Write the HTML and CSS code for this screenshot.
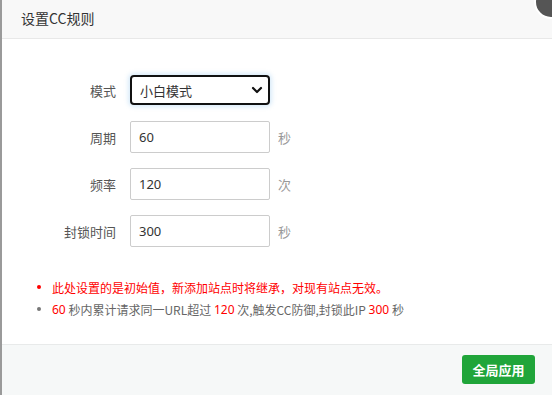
FILE: index.html
```html
<!DOCTYPE html>
<html lang="zh-CN">
<head>
    <meta charset="UTF-8">
    <meta name="viewport" content="width=device-width, initial-scale=1.0">
    <title>设置CC规则</title>
    <link rel="stylesheet" href="styles.css">
</head>
<body>

    <div class="dialog">
        <!-- Title bar -->
        <div class="dialog-head">设置CC规则</div>
        <span class="close-btn"></span>

        <div class="dialog-body">
            <div class="form-row">
                <label>模式</label>
                <div class="select-box">
                    <span>小白模式</span>
                    <svg width="12" height="8" viewBox="0 0 12 8">
                        <path d="M2 2 L6 6 L10 2" fill="none" stroke="#111" stroke-width="2.2" stroke-linecap="round" stroke-linejoin="round"/>
                    </svg>
                </div>
            </div>
            <div class="form-row">
                <label>周期</label>
                <input type="text" value="60">
                <span class="unit">秒</span>
            </div>
            <div class="form-row">
                <label>频率</label>
                <input type="text" value="120">
                <span class="unit">次</span>
            </div>
            <div class="form-row">
                <label>封锁时间</label>
                <input type="text" value="300">
                <span class="unit">秒</span>
            </div>

            <ul class="notes">
                <li class="warn">此处设置的是初始值，新添加站点时将继承，对现有站点无效。</li>
                <li><em>60</em>&nbsp;秒内累计请求同一URL超过&nbsp;<em>120</em>&nbsp;次,触发CC防御,封锁此IP&nbsp;<em>300</em>&nbsp;秒</li>
            </ul>
        </div>

        <div class="dialog-foot">
            <button class="btn-apply">全局应用</button>
        </div>
    </div>

</body>
</html>
```

FILE: styles.css
```css
html, body {
    margin: 0;
    padding: 0;
    height: 100%;
    overflow: hidden;
}

body {
    background: #9a9a9a;
    font-family: "Noto Sans CJK SC", "Noto Sans", sans-serif;
    padding-left: 2px;
    box-sizing: border-box;
}

.dialog {
    position: relative;
    height: 395px;
    background: #fff;
    display: flex;
    flex-direction: column;
}

.dialog-head {
    height: 38px;
    line-height: 36px;
    padding-left: 19px;
    font-size: 14px;
    color: #333;
    background: #f8f8f8;
    border-bottom: 1px solid #e8e8e8;
}

/* close button peeking from the corner */
.close-btn {
    position: absolute;
    top: -15px;
    right: -16px;
    width: 30px;
    height: 30px;
    border-radius: 50%;
    background: #555;
    border: 2px solid #fff;
}

.dialog-body {
    flex: 1;
    padding-top: 35px;
}

.form-row {
    display: flex;
    align-items: center;
    height: 32px;
    margin-bottom: 15px;
}

.form-row label {
    width: 114px;
    margin-right: 14px;
    text-align: right;
    font-size: 13px;
    color: #555;
}

.form-row input {
    width: 140px;
    height: 32px;
    box-sizing: border-box;
    border: 1px solid #ccc;
    border-radius: 2px;
    padding: 0 8px;
    font-family: "Noto Sans", sans-serif;
    font-size: 13px;
    color: #333;
    outline: none;
}

.select-box {
    width: 140px;
    height: 30px;
    box-sizing: border-box;
    border: 2px solid #111;
    border-radius: 4px;
    box-shadow: 0 0 4px 2px rgba(102, 175, 233, 0.25);
    display: flex;
    align-items: center;
    justify-content: space-between;
    padding: 0 5px 0 8px;
    font-size: 13px;
    color: #333;
}

.unit {
    margin-left: 8px;
    font-size: 13px;
    color: #999;
}

.notes {
    list-style: none;
    margin: 29px 0 0;
    padding: 0 0 0 35px;
    font-size: 12px;
    color: #666;
}

.notes li {
    display: flex;
    align-items: center;
    height: 22px;
    white-space: pre;
}

.notes li::before {
    content: "";
    width: 4px;
    height: 4px;
    border-radius: 50%;
    background: #777;
    margin-right: 11px;
}

.notes li.warn {
    color: #f00;
}

.notes li.warn::before {
    background: #f00;
}

.notes em {
    font-style: normal;
    color: #f00;
    font-family: "Noto Sans", sans-serif;
}

.dialog-foot {
    height: 51px;
    box-sizing: border-box;
    background: #f6f8f8;
    border-top: 1px solid #e8eaea;
    display: flex;
    justify-content: flex-end;
    padding: 10px 17px 0 0;
}

.btn-apply {
    width: 73px;
    height: 29px;
    background-color: #20a53a;
    color: white;
    border: none;
    border-radius: 3px;
    font-family: "Noto Sans CJK SC", sans-serif;
    font-size: 13px;
    font-weight: bold;
    cursor: pointer;
}
```
